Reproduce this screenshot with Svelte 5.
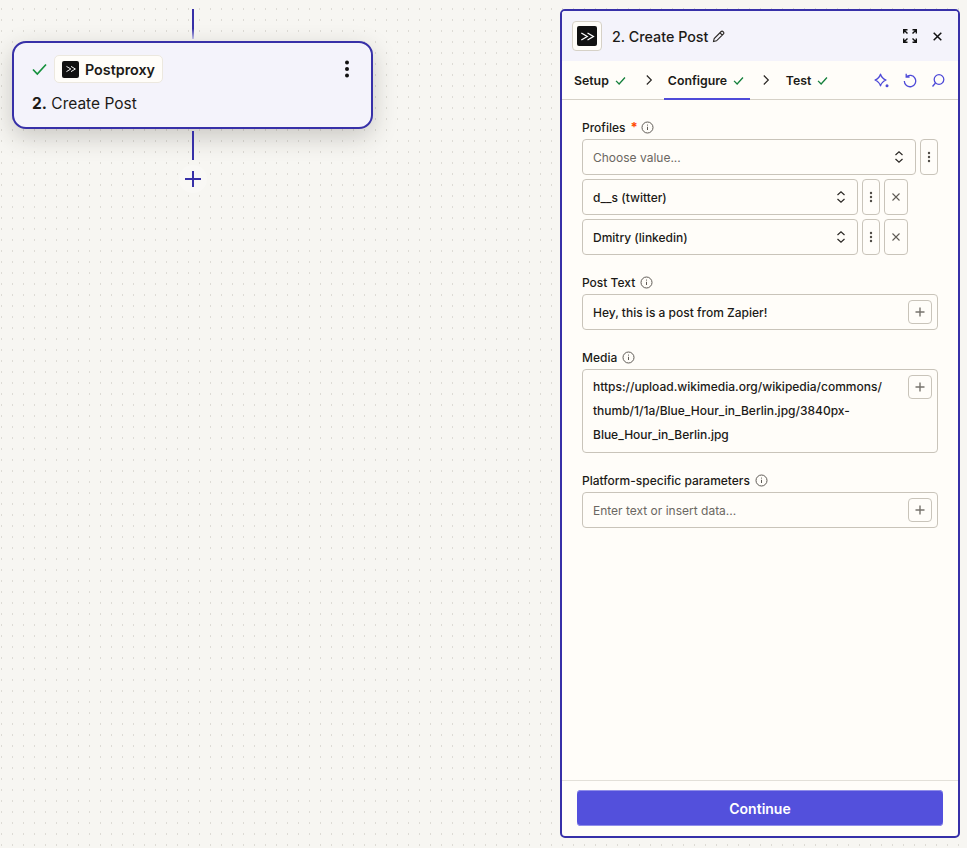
<script>
  const check = "M2.500 8.500 6.300 12.300 13.500 4.300";
</script>

{#snippet logo(cls)}
  <span class="logo {cls}">
    <svg viewBox="0 0 16 16" fill="none" stroke="#fff" stroke-width="1.100"><path d="M2.800 5 7.800 8l-5 3M8 5l5 3-5 3" /></svg>
  </span>
{/snippet}

{#snippet tick()}
  <svg class="tick" width="13" height="13" viewBox="0 0 16 16" fill="none" stroke="#15803d" stroke-width="1.600"><path d={check} /></svg>
{/snippet}

{#snippet info()}
  <svg class="info" width="13" height="13" viewBox="0 0 13 13" fill="none" stroke="#5f5b56" stroke-width="1"><circle cx="6.500" cy="6.500" r="5.500" /><path d="M6.500 5.800v3.200" /><path d="M6.500 3.600v1" /></svg>
{/snippet}

{#snippet updown()}
  <svg width="10" height="14" viewBox="0 0 10 14" fill="none" stroke="#2b2825" stroke-width="1.200"><path d="M1.500 5 5 1.700 8.500 5M1.500 9 5 12.300 8.500 9" /></svg>
{/snippet}

{#snippet kebab()}
  <button class="side narrow" aria-label="More">
    <svg width="4" height="12" viewBox="0 0 4 12" fill="#4f4b46"><circle cx="2" cy="2" r="1.200" /><circle cx="2" cy="6" r="1.200" /><circle cx="2" cy="10" r="1.200" /></svg>
  </button>
{/snippet}

{#snippet remove()}
  <button class="side wide" aria-label="Remove">
    <svg width="10" height="10" viewBox="0 0 10 10" fill="none" stroke="#5f5b56" stroke-width="1.100"><path d="M1.500 1.500l7 7M8.500 1.500l-7 7" /></svg>
  </button>
{/snippet}

{#snippet plus()}
  <button class="plus" aria-label="Insert">
    <svg width="12" height="12" viewBox="0 0 12 12" fill="none" stroke="#77736d" stroke-width="1.400"><path d="M6 1.500v9M1.500 6h9" /></svg>
  </button>
{/snippet}

{#snippet chevron()}
  <svg class="chev" width="8" height="12" viewBox="0 0 8 12" fill="none" stroke="#2b2825" stroke-width="1.200"><path d="M1.800 1.500 6.300 6l-4.500 4.500" /></svg>
{/snippet}

<div class="page">
  <div class="line top"></div>
  <div class="node">
    <div class="node-row">
      <svg class="node-tick" width="15" height="15" viewBox="0 0 15 15" fill="none" stroke="#15913d" stroke-width="1.700"><path d="M1 7.500 5.300 12 14 2.500" /></svg>
      <span class="chip">{@render logo("small")}Postproxy</span>
      <svg class="node-menu" width="6" height="18" viewBox="0 0 6 18" fill="#111"><circle cx="3" cy="2.500" r="2" /><circle cx="3" cy="9" r="2" /><circle cx="3" cy="15.500" r="2" /></svg>
    </div>
    <div class="node-title"><b>2.</b> Create Post</div>
  </div>
  <div class="line bottom"></div>
  <div class="add">
    <svg width="18" height="18" viewBox="0 0 18 18" fill="none" stroke="#3730a8" stroke-width="2"><path d="M9 1v16M1 9h16" /></svg>
  </div>

  <aside class="panel">
    <header class="head">
      <span class="logo-box">{@render logo("large")}</span>
      <span class="head-title">2. Create Post</span>
      <svg class="pencil" width="13" height="13" viewBox="0 0 13 13" fill="none" stroke="#2b2825" stroke-width="1.100"><path d="M1.500 11.500l.7-3L9.200 1.500a1.200 1.200 0 0 1 1.700 0l.6.6a1.200 1.200 0 0 1 0 1.700L4.500 10.800zM8 2.800l2.200 2.200" /></svg>
      <span class="spacer"></span>
      <svg width="14" height="14" viewBox="0 0 14 14" fill="none" stroke="#111" stroke-width="1.400"><path d="M.7 4.500V.7h3.800M.9.900l3.600 3.600M9.500.7h3.800v3.800M13.100.9 9.500 4.500M.7 9.500v3.800h3.800M.9 13.100l3.600-3.600M13.300 9.500v3.800H9.500M13.100 13.100 9.500 9.500" /></svg>
      <svg class="close" width="9" height="9" viewBox="0 0 9 9" fill="none" stroke="#111" stroke-width="1.500"><path d="M.7.700l7.600 7.600M8.300.700.700 8.300" /></svg>
    </header>

    <nav class="tabs">
      <span class="tab">Setup {@render tick()}</span>
      {@render chevron()}
      <span class="tab active">Configure {@render tick()}</span>
      {@render chevron()}
      <span class="tab">Test {@render tick()}</span>
      <span class="spacer"></span>
      <span class="tools">
        <svg width="17" height="15" viewBox="0 0 17 15" fill="none" stroke="#4f4bd8" stroke-width="1.300"><path d="M8.500 1.200C9.400 4 11 5.800 14 7 11 8.200 9.400 10 8.500 12.800 7.600 10 6 8.200 3 7 6 5.800 7.600 4 8.500 1.200z" stroke-linejoin="round" /><circle cx="15" cy="12.700" r="1.500" fill="#4f4bd8" stroke="none" /></svg>
        <svg width="14" height="15" viewBox="0 0 14 15" fill="none" stroke="#4f4bd8" stroke-width="1.300"><path d="M3.200 3.800A5.700 5.700 0 1 1 1.300 8M3.200.8v3.200h3.400" /></svg>
        <svg width="14" height="15" viewBox="0 0 14 15" fill="none" stroke="#4f4bd8" stroke-width="1.300"><circle cx="8" cy="6.500" r="4.800" /><path d="M4.500 10 1.500 13.500" /></svg>
      </span>
    </nav>

    <div class="body">
      <section class="field">
        <div class="label">Profiles <span class="req">*</span> {@render info()}</div>
        <div class="row">
          <div class="input grow muted"><span>Choose value...</span><span class="spacer"></span>{@render updown()}</div>
          {@render kebab()}
        </div>
        <div class="row">
          <div class="input pick"><span>d__s (twitter)</span><span class="spacer"></span>{@render updown()}</div>
          {@render kebab()}
          {@render remove()}
        </div>
        <div class="row">
          <div class="input pick"><span>Dmitry (linkedin)</span><span class="spacer"></span>{@render updown()}</div>
          {@render kebab()}
          {@render remove()}
        </div>
      </section>

      <section class="field">
        <div class="label">Post Text {@render info()}</div>
        <div class="input"><span>Hey, this is a post from Zapier!</span><span class="spacer"></span>{@render plus()}</div>
      </section>

      <section class="field">
        <div class="label">Media {@render info()}</div>
        <div class="input multi">
          <div class="multi-text">https://upload.wikimedia.org/wikipedia/commons/<br />thumb/1/1a/Blue_Hour_in_Berlin.jpg/3840px-<br />Blue_Hour_in_Berlin.jpg</div>
          {@render plus()}
        </div>
      </section>

      <section class="field">
        <div class="label">Platform-specific parameters {@render info()}</div>
        <div class="input muted"><span>Enter text or insert data...</span><span class="spacer"></span>{@render plus()}</div>
      </section>
    </div>

    <footer class="foot">
      <button class="continue">Continue</button>
    </footer>
  </aside>
</div>

<style>
  :global(body) {
    margin: 0;
  }
  .page {
    position: relative;
    width: 967px;
    height: 848px;
    overflow: hidden;
    box-sizing: border-box;
    padding: 9px 7px 10px 560px;
    display: flex;
    font-family: Inter, "Liberation Sans", sans-serif;
    color: #1c1a17;
    background-color: #f7f6f2;
    background-image: radial-gradient(ellipse 0.9px 1.300px at 0.5px 1px, #dddbd5 70%, transparent 100%);
    background-size: 11px 11px;
    background-position: 1px 8px;
  }
  .line {
    position: absolute;
    left: 191.500px;
    width: 2px;
    background: #3730a8;
  }
  .line.top {
    top: 9px;
    height: 30px;
    background: linear-gradient(#3730a8 65%, #c9c7ee);
  }
  .line.bottom {
    top: 131px;
    height: 29px;
  }
  .add {
    position: absolute;
    left: 178.500px;
    top: 164.500px;
    width: 28px;
    height: 28px;
    display: flex;
    align-items: center;
    justify-content: center;
    border-radius: 50%;
    background: #f9f8f5;
  }
  .node {
    position: absolute;
    left: 12px;
    top: 41px;
    width: 361px;
    height: 88px;
    box-sizing: border-box;
    padding: 12px 18px 0;
    background: #f4f3fb;
    border: 2px solid #3730a8;
    border-radius: 14px;
    box-shadow: 0 8px 24px rgba(40, 36, 30, 0.22);
  }
  .node-row {
    display: flex;
    align-items: center;
    height: 28px;
  }
  .node-tick {
    margin-right: 7px;
  }
  .chip {
    display: inline-flex;
    align-items: center;
    gap: 6px;
    height: 28px;
    box-sizing: border-box;
    padding: 0 7px;
    background: #fffdf9;
    border: 1px solid #ece8df;
    border-radius: 5px;
    font-size: 14.300px;
    font-weight: 600;
  }
  .node-menu {
    margin-left: auto;
    margin-right: 3px;
  }
  .node-title {
    margin-top: 11px;
    font-size: 15.500px;
    line-height: 20px;
    font-weight: 400;
  }
  .node-title b {
    font-weight: 700;
  }
  .logo {
    display: inline-flex;
    align-items: center;
    justify-content: center;
    background: #111;
    border-radius: 2px;
  }
  .logo.small {
    width: 17px;
    height: 17px;
  }
  .logo.large {
    width: 20px;
    height: 20px;
  }
  .logo.small svg {
    width: 14px;
  }
  .logo.large svg {
    width: 19px;
  }
  .panel {
    flex: 1;
    display: flex;
    flex-direction: column;
    background: #fffdf9;
    border: 2px solid #3730a8;
    border-radius: 5px;
    overflow: hidden;
  }
  .head {
    display: flex;
    align-items: center;
    height: 50px;
    flex: none;
    box-sizing: border-box;
    padding: 0 16px 0 10px;
    background: #f4f3fb;
  }
  .logo-box {
    display: flex;
    align-items: center;
    justify-content: center;
    width: 30px;
    height: 30px;
    box-sizing: border-box;
    background: #fffdf9;
    border: 1px solid #d6d1c7;
    border-radius: 4px;
  }
  .head-title {
    margin-left: 10px;
    font-size: 14.300px;
    font-weight: 500;
  }
  .pencil {
    margin-left: 4px;
  }
  .close {
    margin-left: 16px;
  }
  .spacer {
    flex: 1;
  }
  .tabs {
    display: flex;
    align-items: center;
    flex: none;
    height: 39px;
    box-sizing: border-box;
    padding: 0 13px 0 12px;
    border-bottom: 1px solid #d6d1c7;
    font-size: 12.300px;
    font-weight: 600;
  }
  .tab {
    display: flex;
    align-items: center;
    align-self: stretch;
    gap: 5px;
    box-sizing: border-box;
  }
  .tab.active {
    padding: 1px 4px 0;
    margin: 0 0 -1px -4px;
    border-bottom: 2px solid #4f4bd8;
    width: 86px;
  }
  .chev {
    margin: 0 15px 0 18px;
  }
  .chev:nth-of-type(2) {
    margin: 0 16px 0 12px;
  }
  .tools {
    display: flex;
    align-items: center;
    gap: 14px;
  }
  .body {
    flex: 1;
    box-sizing: border-box;
    padding: 0 20px;
    font-size: 12px;
  }
  .field {
    margin-top: 18px;
  }
  .label {
    display: flex;
    align-items: center;
    gap: 5px;
    height: 18px;
    margin-bottom: 3px;
    font-size: 12px;
    font-weight: 500;
  }
  .req {
    margin-right: -2px;
    color: #ff4a00;
    font-size: 13px;
    font-weight: 700;
  }
  .row {
    display: flex;
    gap: 4px;
    margin-bottom: 4px;
  }
  .row:last-child {
    margin-bottom: 0;
  }
  .input {
    display: flex;
    align-items: center;
    height: 36px;
    box-sizing: border-box;
    padding: 0 5px 0 10px;
    background: #fffdf9;
    border: 1px solid #c9c4ba;
    border-radius: 4px;
    font-weight: 500;
  }
  .row .input {
    padding-right: 11px;
  }
  .grow {
    flex: 1;
  }
  .pick {
    width: 276px;
  }
  .muted {
    color: #6b6762;
    font-weight: 400;
  }
  .multi {
    height: 84px;
    align-items: flex-start;
    justify-content: space-between;
    padding-top: 5px;
  }
  .multi-text {
    line-height: 24px;
  }
  .side {
    display: flex;
    align-items: center;
    justify-content: center;
    height: 36px;
    padding: 0;
    box-sizing: border-box;
    background: #fffdf9;
    border: 1px solid #c9c4ba;
    border-radius: 4px;
  }
  .narrow {
    width: 18px;
  }
  .wide {
    width: 24px;
  }
  .plus {
    display: flex;
    align-items: center;
    justify-content: center;
    width: 24px;
    height: 24px;
    padding: 0;
    flex: none;
    background: #fffdf9;
    border: 1px solid #c9c4ba;
    border-radius: 4px;
  }
  .foot {
    flex: none;
    height: 56px;
    box-sizing: border-box;
    padding: 9px 15px 0;
    border-top: 1px solid #e3e0d9;
  }
  .continue {
    display: block;
    width: 100%;
    height: 36px;
    background: #5350dc;
    border: none;
    border-radius: 4px;
    box-shadow: inset 0 1px 0 #908ee9, inset 0 -1px 0 #908ee9;
    color: #fff;
    font-family: inherit;
    font-size: 14px;
    font-weight: 600;
  }
</style>
